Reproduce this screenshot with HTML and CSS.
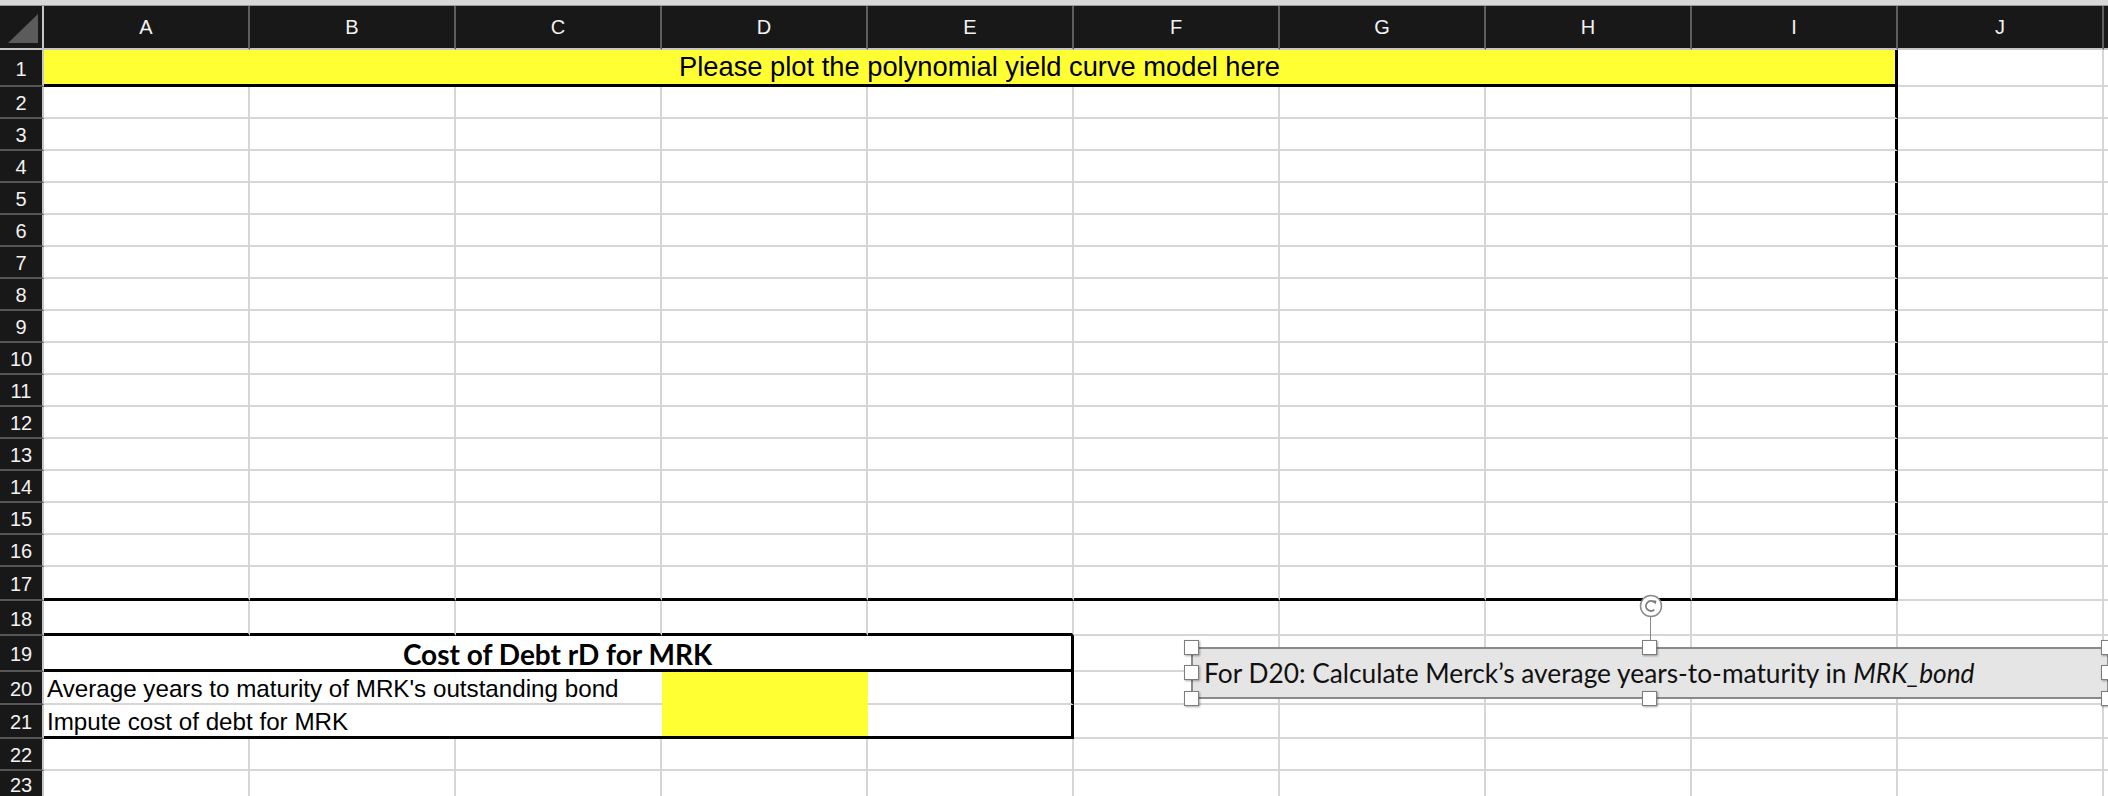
FILE: index.html
```html
<!DOCTYPE html>
<html>
<head>
<meta charset="utf-8">
<title>Sheet</title>
<link rel="stylesheet" href="styles.css">
</head>
<body>
<div class="app">
  <div class="topbar"></div>
  <div class="sheet">
    <div class="corner"><svg class="tri" width="42" height="42" viewBox="0 0 42 42"><polygon points="8,37 38,37 38,8" fill="#5b5b5b"/></svg></div>
    <div class="ch">A</div><div class="ch">B</div><div class="ch">C</div><div class="ch">D</div><div class="ch">E</div><div class="ch">F</div><div class="ch">G</div><div class="ch">H</div><div class="ch">I</div><div class="ch">J</div><div class="ch k"></div>

    <div class="rh">1</div><div class="c y bb br s9 title">Please plot the polynomial yield curve model here</div><div class="c"></div><div class="c k"></div>

    <div class="rh">2</div><div class="c"></div><div class="c"></div><div class="c"></div><div class="c"></div><div class="c"></div><div class="c"></div><div class="c"></div><div class="c"></div><div class="c br"></div><div class="c"></div><div class="c k"></div>
    <div class="rh">3</div><div class="c"></div><div class="c"></div><div class="c"></div><div class="c"></div><div class="c"></div><div class="c"></div><div class="c"></div><div class="c"></div><div class="c br"></div><div class="c"></div><div class="c k"></div>
    <div class="rh">4</div><div class="c"></div><div class="c"></div><div class="c"></div><div class="c"></div><div class="c"></div><div class="c"></div><div class="c"></div><div class="c"></div><div class="c br"></div><div class="c"></div><div class="c k"></div>
    <div class="rh">5</div><div class="c"></div><div class="c"></div><div class="c"></div><div class="c"></div><div class="c"></div><div class="c"></div><div class="c"></div><div class="c"></div><div class="c br"></div><div class="c"></div><div class="c k"></div>
    <div class="rh">6</div><div class="c"></div><div class="c"></div><div class="c"></div><div class="c"></div><div class="c"></div><div class="c"></div><div class="c"></div><div class="c"></div><div class="c br"></div><div class="c"></div><div class="c k"></div>
    <div class="rh">7</div><div class="c"></div><div class="c"></div><div class="c"></div><div class="c"></div><div class="c"></div><div class="c"></div><div class="c"></div><div class="c"></div><div class="c br"></div><div class="c"></div><div class="c k"></div>
    <div class="rh">8</div><div class="c"></div><div class="c"></div><div class="c"></div><div class="c"></div><div class="c"></div><div class="c"></div><div class="c"></div><div class="c"></div><div class="c br"></div><div class="c"></div><div class="c k"></div>
    <div class="rh">9</div><div class="c"></div><div class="c"></div><div class="c"></div><div class="c"></div><div class="c"></div><div class="c"></div><div class="c"></div><div class="c"></div><div class="c br"></div><div class="c"></div><div class="c k"></div>
    <div class="rh">10</div><div class="c"></div><div class="c"></div><div class="c"></div><div class="c"></div><div class="c"></div><div class="c"></div><div class="c"></div><div class="c"></div><div class="c br"></div><div class="c"></div><div class="c k"></div>
    <div class="rh">11</div><div class="c"></div><div class="c"></div><div class="c"></div><div class="c"></div><div class="c"></div><div class="c"></div><div class="c"></div><div class="c"></div><div class="c br"></div><div class="c"></div><div class="c k"></div>
    <div class="rh">12</div><div class="c"></div><div class="c"></div><div class="c"></div><div class="c"></div><div class="c"></div><div class="c"></div><div class="c"></div><div class="c"></div><div class="c br"></div><div class="c"></div><div class="c k"></div>
    <div class="rh">13</div><div class="c"></div><div class="c"></div><div class="c"></div><div class="c"></div><div class="c"></div><div class="c"></div><div class="c"></div><div class="c"></div><div class="c br"></div><div class="c"></div><div class="c k"></div>
    <div class="rh">14</div><div class="c"></div><div class="c"></div><div class="c"></div><div class="c"></div><div class="c"></div><div class="c"></div><div class="c"></div><div class="c"></div><div class="c br"></div><div class="c"></div><div class="c k"></div>
    <div class="rh">15</div><div class="c"></div><div class="c"></div><div class="c"></div><div class="c"></div><div class="c"></div><div class="c"></div><div class="c"></div><div class="c"></div><div class="c br"></div><div class="c"></div><div class="c k"></div>
    <div class="rh">16</div><div class="c"></div><div class="c"></div><div class="c"></div><div class="c"></div><div class="c"></div><div class="c"></div><div class="c"></div><div class="c"></div><div class="c br"></div><div class="c"></div><div class="c k"></div>

    <div class="rh">17</div><div class="c bb"></div><div class="c bb"></div><div class="c bb"></div><div class="c bb"></div><div class="c bb"></div><div class="c bb"></div><div class="c bb"></div><div class="c bb"></div><div class="c bb br"></div><div class="c"></div><div class="c k"></div>

    <div class="rh">18</div><div class="c bb"></div><div class="c bb"></div><div class="c bb"></div><div class="c bb"></div><div class="c bb"></div><div class="c"></div><div class="c"></div><div class="c"></div><div class="c"></div><div class="c"></div><div class="c k"></div>

    <div class="rh">19</div><div class="c bb br s5 hdr">Cost of Debt rD for MRK</div><div class="c"></div><div class="c"></div><div class="c"></div><div class="c"></div><div class="c"></div><div class="c k"></div>

    <div class="rh">20</div><div class="c nr s3 lbl">Average years to maturity of MRK's outstanding bond</div><div class="c y bb nr r2"></div><div class="c br"></div><div class="c"></div><div class="c"></div><div class="c"></div><div class="c"></div><div class="c"></div><div class="c k"></div>

    <div class="rh">21</div><div class="c nr bb s3 lbl">Impute cost of debt for MRK</div><div class="c br bb"></div><div class="c"></div><div class="c"></div><div class="c"></div><div class="c"></div><div class="c"></div><div class="c k"></div>

    <div class="rh">22</div><div class="c"></div><div class="c"></div><div class="c"></div><div class="c"></div><div class="c"></div><div class="c"></div><div class="c"></div><div class="c"></div><div class="c"></div><div class="c"></div><div class="c k"></div>
    <div class="rh">23</div><div class="c"></div><div class="c"></div><div class="c"></div><div class="c"></div><div class="c"></div><div class="c"></div><div class="c"></div><div class="c"></div><div class="c"></div><div class="c"></div><div class="c k"></div>
  </div>

  <div class="shape">
    <span class="note">For D20: Calculate Merck’s average years-to-maturity in <i>MRK_bond</i></span>
    <div class="stem"></div>
    <div class="rot"><svg width="24" height="24" viewBox="0 0 24 24"><circle cx="12" cy="12" r="10.5" fill="#fff" stroke="#8a8a8a" stroke-width="1.5"/><path d="M15.3 8.3 A5 5 0 1 0 15.3 15.7" fill="none" stroke="#7a7a7a" stroke-width="1.8"/><polygon points="13.2,6.6 17.4,6.6 16.6,10.6" fill="#7a7a7a"/></svg></div>
    <div class="hd h-tl"></div><div class="hd h-tm"></div><div class="hd h-tr"></div>
    <div class="hd h-ml"></div><div class="hd h-mr"></div>
    <div class="hd h-bl"></div><div class="hd h-bm"></div><div class="hd h-br"></div>
  </div>
</div>
</body>
</html>
```

FILE: styles.css
```css
* { box-sizing: border-box; }
html, body {
  margin: 0;
  padding: 0;
  width: 2108px;
  height: 796px;
  overflow: hidden;
  background: #ffffff;
  font-family: "Liberation Sans", Arial, sans-serif;
}
.app {
  position: relative;
  width: 2108px;
  height: 796px;
  overflow: hidden;
}
.topbar {
  height: 6px;
  background: #d8d8d8;
  border-bottom: 1px solid #9a9a9a;
}
.sheet {
  display: grid;
  grid-template-columns: 44px repeat(10, 206px) 1fr;
  grid-template-rows: 44px 37px repeat(15, 32px) 34px 35px 36px 33px 34px 32px 1fr;
  height: 790px;
}
.corner {
  background: #181818;
  border-right: 2px solid #c6c6c6;
  border-bottom: 2px solid #c6c6c6;
}
.tri { display: block; }
.ch {
  background: #181818;
  color: #f2f2f2;
  border-right: 2px solid #5e5e5e;
  border-bottom: 2px solid #c6c6c6;
  font-size: 20px;
  display: flex;
  align-items: center;
  justify-content: center;
}
.ch.k { border-right: none; }
.rh {
  background: #181818;
  color: #f2f2f2;
  border-right: 2px solid #c6c6c6;
  border-bottom: 2px solid #555555;
  font-size: 20px;
  display: flex;
  align-items: center;
  justify-content: center;
  padding-top: 3px;
}
.c {
  background: #ffffff;
  border-right: 2px solid #d6d6d6;
  border-bottom: 2px solid #d6d6d6;
  min-width: 0;
}
.c.k { border-right: none; }
.y { background: #ffff33; }
.bb { border-bottom: 3px solid #000000; }
.br { border-right: 3px solid #000000; }
.nr { border-right: none; }
.s3 { grid-column: span 3; }
.s5 { grid-column: span 5; }
.s9 { grid-column: span 9; }
.r2 { grid-row: span 2; }

.title {
  display: flex;
  justify-content: center;
  align-items: center;
  padding-left: 20px;
  font-size: 27.3px;
  line-height: 30px;
  color: #000;
  white-space: nowrap;
}
.hdr {
  display: flex;
  justify-content: center;
  align-items: flex-end;
  font-family: Lato, "Open Sans", sans-serif;
  font-weight: 700;
  font-size: 28px;
  line-height: 30px;
  padding-bottom: 0;
  color: #000;
  white-space: nowrap;
}
.lbl {
  display: flex;
  align-items: flex-end;
  padding-left: 3px;
  padding-bottom: 1px;
  font-size: 24.2px;
  line-height: 26px;
  color: #000;
  white-space: nowrap;
}

.shape {
  position: absolute;
  left: 1191px;
  top: 647px;
  width: 918px;
  height: 52px;
  background: #e5e5e5;
  border: 2px solid #8a8a8a;
  display: flex;
  align-items: center;
  padding-left: 11px;
  font-family: Lato, "Open Sans", sans-serif;
  font-size: 26.3px;
  color: #111;
  white-space: nowrap;
}
.note i { font-style: italic; }
.stem {
  position: absolute;
  left: 457px;
  top: -32px;
  width: 1px;
  height: 25px;
  background: #8a8a8a;
}
.rot {
  position: absolute;
  left: 446px;
  top: -55px;
  width: 24px;
  height: 24px;
}
.rot svg { display: block; }
.hd {
  position: absolute;
  width: 15px;
  height: 15px;
  background: #ffffff;
  border: 1px solid #7d7d7d;
  box-shadow: 1px 1px 2px rgba(0, 0, 0, 0.35);
}
.h-tl { left: -9px; top: -9px; }
.h-tm { left: calc(50% - 8px); top: -9px; }
.h-tr { right: -9px; top: -9px; }
.h-ml { left: -9px; top: calc(50% - 8px); }
.h-mr { right: -9px; top: calc(50% - 8px); }
.h-bl { left: -9px; bottom: -9px; }
.h-bm { left: calc(50% - 8px); bottom: -9px; }
.h-br { right: -9px; bottom: -9px; }
```
